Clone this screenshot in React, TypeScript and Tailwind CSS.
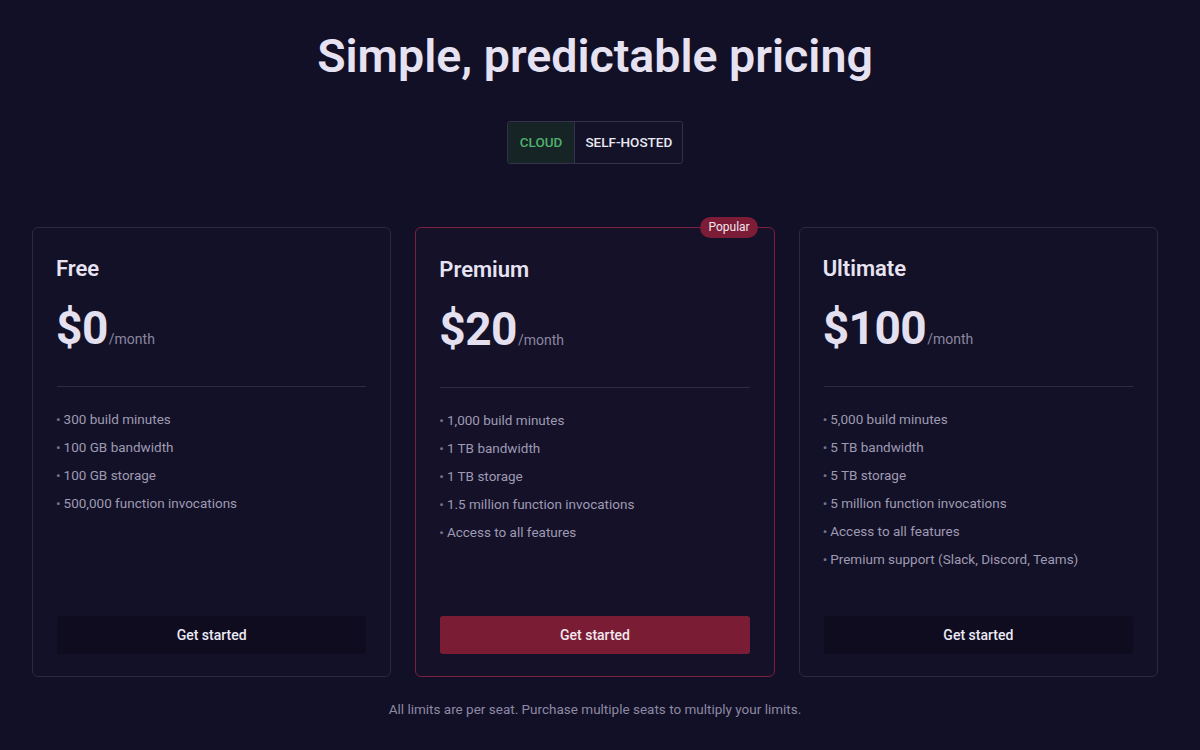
import React from 'react';

interface Plan {
  name: string;
  price: string;
  features: string[];
  popular?: boolean;
}

const plans: Plan[] = [
  {
    name: 'Free',
    price: '$0',
    features: ['300 build minutes', '100 GB bandwidth', '100 GB storage', '500,000 function invocations'],
  },
  {
    name: 'Premium',
    price: '$20',
    popular: true,
    features: [
      '1,000 build minutes',
      '1 TB bandwidth',
      '1 TB storage',
      '1.5 million function invocations',
      'Access to all features',
    ],
  },
  {
    name: 'Ultimate',
    price: '$100',
    features: [
      '5,000 build minutes',
      '5 TB bandwidth',
      '5 TB storage',
      '5 million function invocations',
      'Access to all features',
      'Premium support (Slack, Discord, Teams)',
    ],
  },
];

function PlanCard({ plan }: { plan: Plan }) {
  return (
    <div
      className={`relative flex flex-col rounded-[6px] border px-6 pb-[22px] ${
        plan.popular ? 'border-[#7e1f3c] bg-[#141129] pt-[27px]' : 'border-[#2b2940] bg-[#131127] pt-[26px]'
      }`}
    >
      {plan.popular && (
        <span className="absolute -top-[11px] right-4 rounded-full bg-[#7c1c37] px-2 py-[3px] text-[12px] leading-[15px] text-[#f1e6ee]">
          Popular
        </span>
      )}
      <h3 className="-ml-px text-[22px] font-semibold leading-[30px] text-[#e7e3f2]">{plan.name}</h3>
      <div className="mt-[16px] flex items-end">
        <span className="-ml-px text-[46px] font-bold leading-[56px] tracking-[-0.5px] text-[#e4e0f0]">{plan.price}</span>
        <span className="mb-[6px] ml-[1px] text-[14px] text-[#8a86a0]">/month</span>
      </div>
      <div className="mt-[30px] h-px bg-[#2e2c45]" />
      <ul className="mt-[22px] flex flex-col gap-[8px]">
        {plan.features.map((f) => (
          <li key={f} className="-ml-px text-[13.5px] leading-[20px] text-[#9e9ab2]">
            <span className="mr-[3px] text-[#77738d]">•</span>
            {f}
          </li>
        ))}
      </ul>
      <div className="flex-1" />
      <button
        className={`h-[38px] rounded-[3px] text-[14px] font-medium ${
          plan.popular ? 'bg-[#7b1c35] text-[#f2e8ee]' : 'bg-[#0f0c20] text-[#ece9f5]'
        }`}
      >
        Get started
      </button>
    </div>
  );
}

export default function App() {
  return (
    <div className="h-[750px] w-[1200px] bg-[#121026]" style={{ fontFamily: 'Roboto, "Noto Sans", sans-serif' }}>
      <div className="flex w-[1190px] flex-col items-center pt-[28px]">
        <h1 className="text-[46.5px] font-semibold leading-[56px] text-[#e6e2f2]">Simple, predictable pricing</h1>

        <div className="mt-[37px] flex h-[43px] overflow-hidden rounded-[3px] border border-[#34324a]">
          <button className="bg-[#172425] px-3 text-[13.5px] font-medium text-[#4fb06e]">CLOUD</button>
          <button className="border-l border-[#34324a] bg-[#141228] px-[10px] text-[13.5px] font-medium text-[#ebe8f4]">
            SELF-HOSTED
          </button>
        </div>

        <div className="mt-[63px] grid h-[450px] w-[1126px] grid-cols-3 gap-6">
          {plans.map((p) => (
            <PlanCard key={p.name} plan={p} />
          ))}
        </div>

        <p className="mt-[22px] text-[13.5px] text-[#8d89a3]">
          All limits are per seat. Purchase multiple seats to multiply your limits.
        </p>
      </div>
    </div>
  );
}
